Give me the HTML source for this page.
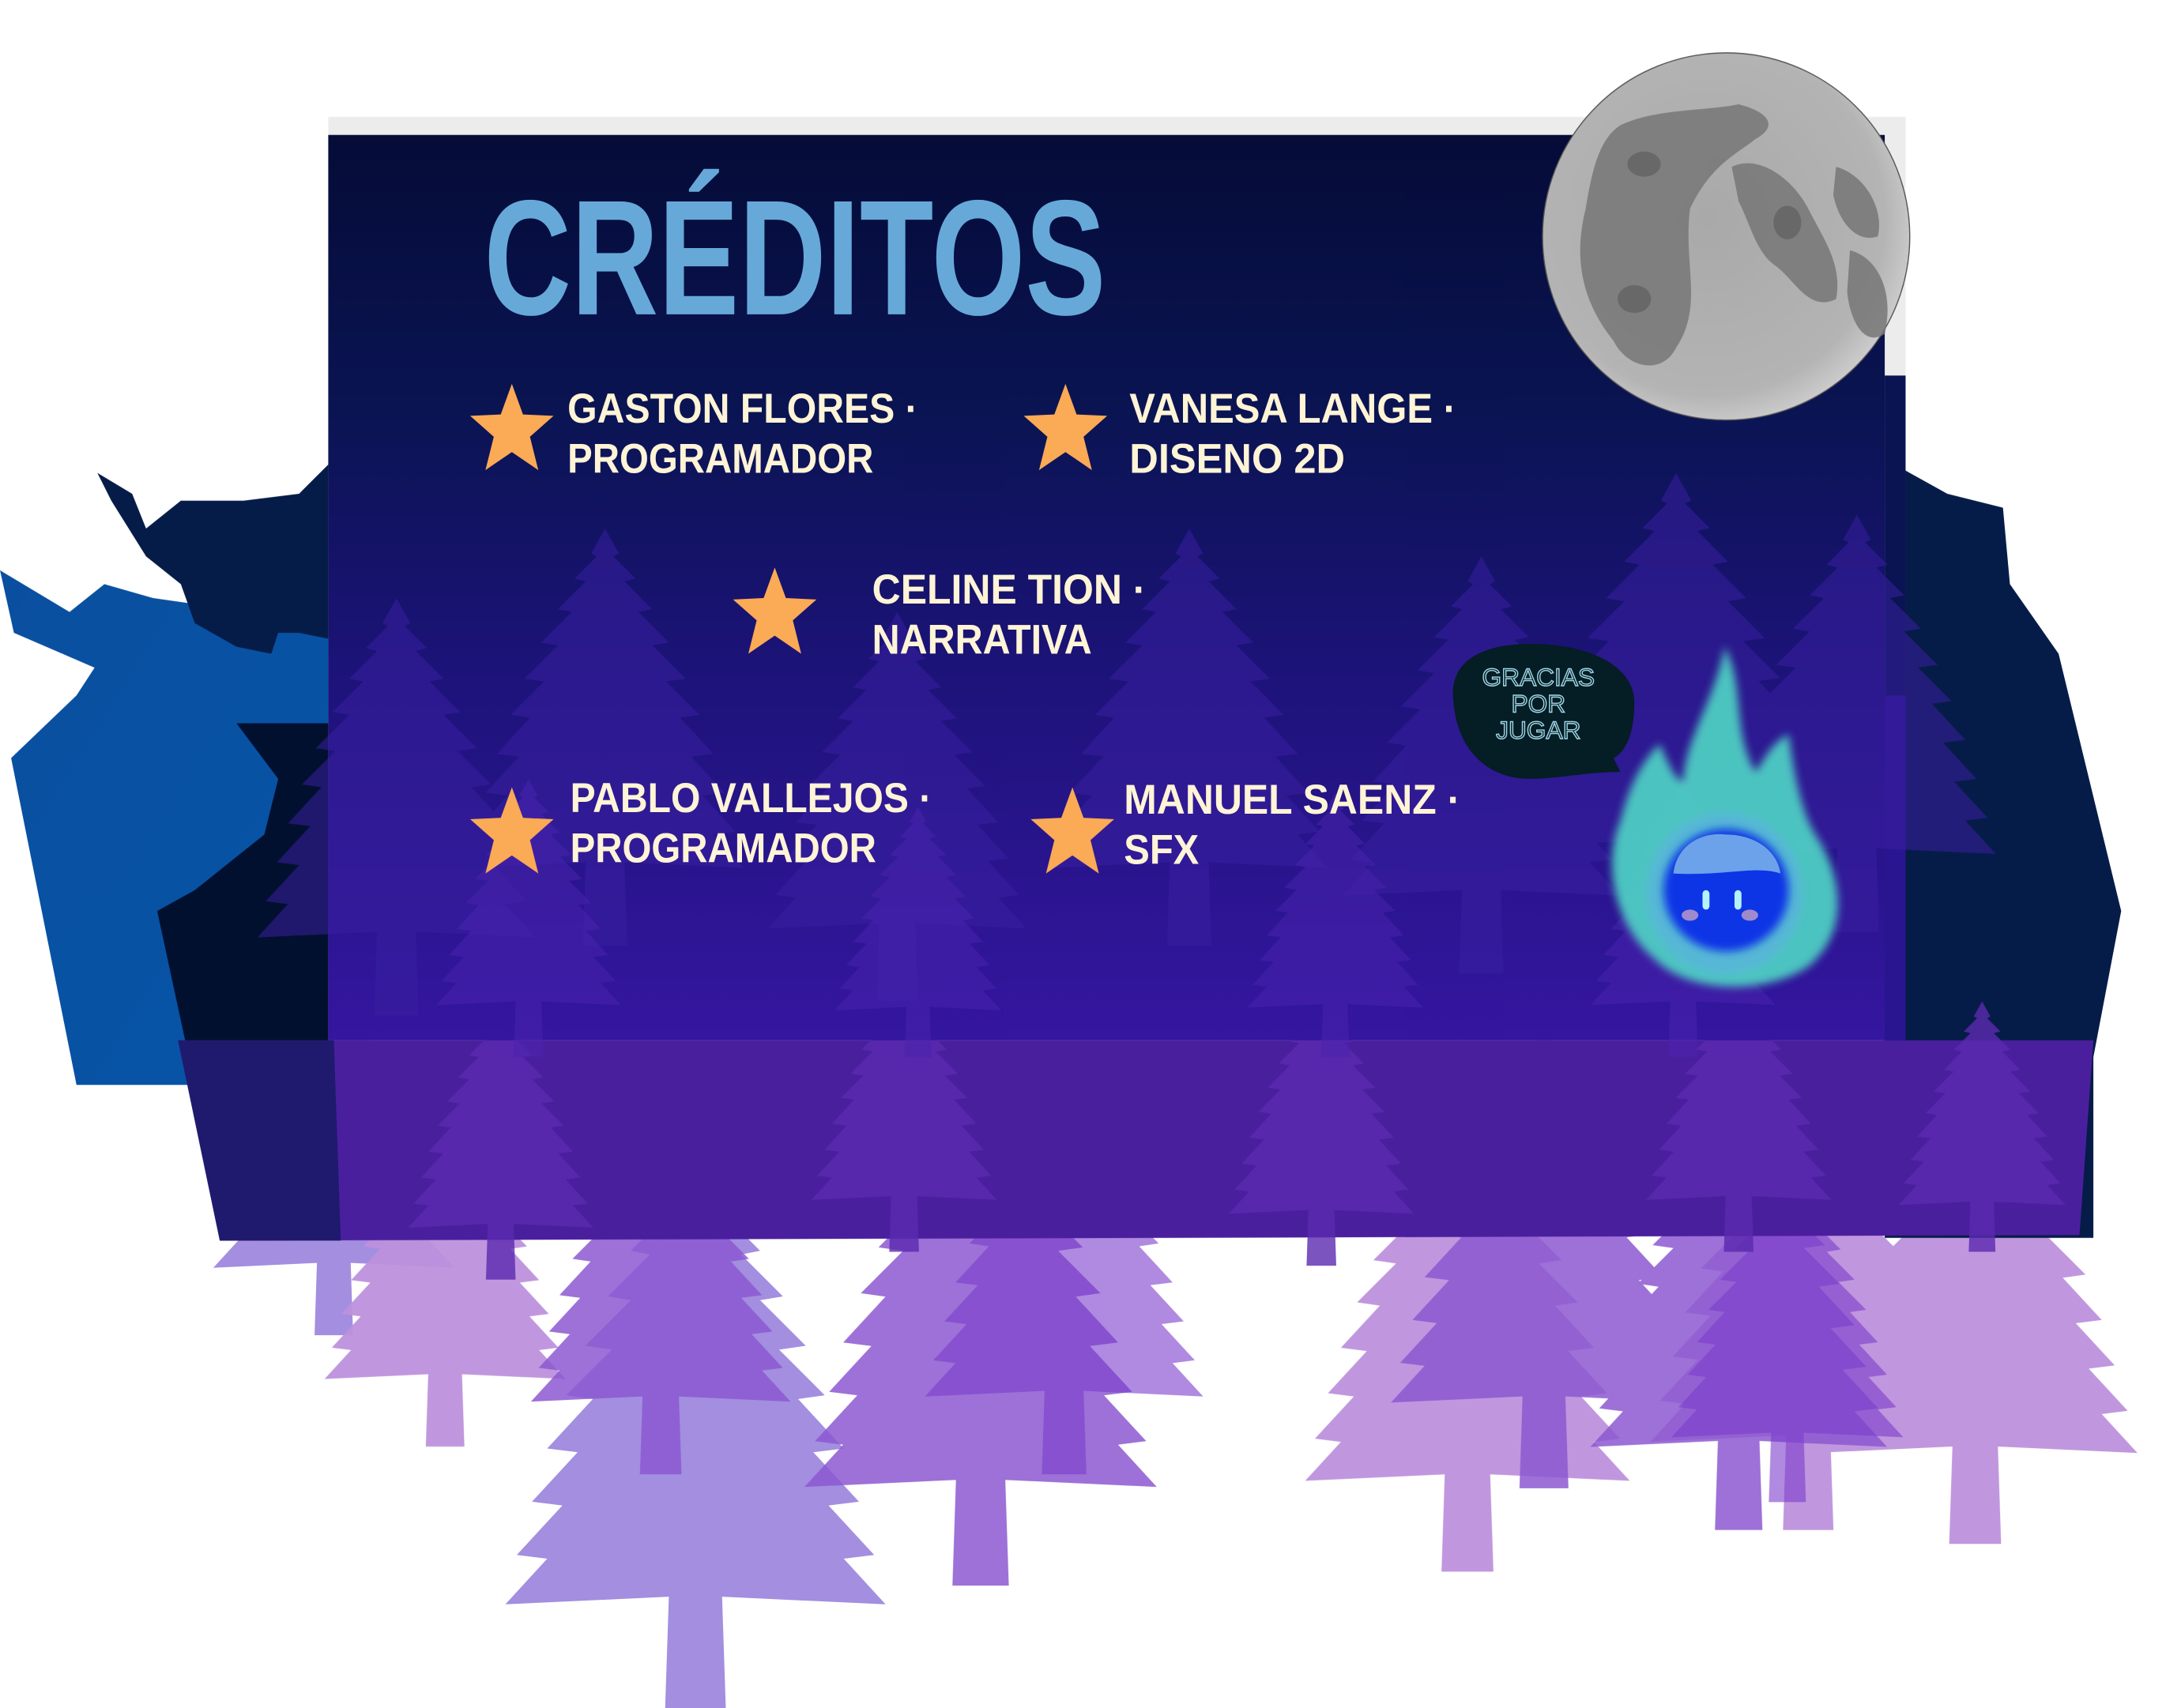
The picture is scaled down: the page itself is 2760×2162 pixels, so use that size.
<!DOCTYPE html>
<html><head><meta charset="utf-8"><style>
html,body{margin:0;padding:0;background:#fff;width:2760px;height:2162px;overflow:hidden}
svg{display:block}
</style></head><body>
<svg width="2760" height="2162" viewBox="0 0 1568 1228" preserveAspectRatio="none" xmlns="http://www.w3.org/2000/svg">
<defs>
<symbol id="tree" viewBox="-100 0 200 300" overflow="visible">
<path d="M0,0 L10,18 L6,20 L22,36 L14,38 L34,58 L24,60 L46,82 L34,84 L58,108 L44,110 L68,134 L54,136 L78,162 L62,164 L86,190 L70,192 L94,218 L78,220 L100,244 L14,240 L16,300 L-16,300 L-14,240 L-100,244 L-78,220 L-94,218 L-70,192 L-86,190 L-62,164 L-78,162 L-54,136 L-68,134 L-44,110 L-58,108 L-34,84 L-46,82 L-24,60 L-34,58 L-14,38 L-22,36 L-6,20 L-10,18 Z"/>
</symbol>
<linearGradient id="pg" x1="0" y1="0" x2="0" y2="1">
<stop offset="0" stop-color="#050c38"/><stop offset="0.3" stop-color="#0a1452"/><stop offset="0.6" stop-color="#1d137a"/><stop offset="1" stop-color="#3516a0"/>
</linearGradient>
<linearGradient id="bl" x1="0" y1="0" x2="1" y2="1">
<stop offset="0" stop-color="#0b4f9f"/><stop offset="1" stop-color="#0655a8"/>
</linearGradient>
<radialGradient id="moon" cx="0.45" cy="0.45" r="0.6">
<stop offset="0" stop-color="#a9a9a9"/><stop offset="0.8" stop-color="#b4b4b4"/><stop offset="1" stop-color="#d4d4d4"/>
</radialGradient>
<filter id="blur"><feGaussianBlur stdDeviation="3"/></filter>
<filter id="blur2"><feGaussianBlur stdDeviation="8"/></filter>
</defs>

<!-- lower lavender trees -->
<g fill="#a38ee0">
<use href="#tree" x="330" y="820" width="340" height="410"/>
<use href="#tree" x="80" y="700" width="320" height="260"/>
</g>
<g fill="#bd92dd" opacity="0.95">
<use href="#tree" x="160" y="780" width="320" height="260"/>
<use href="#tree" x="890" y="780" width="330" height="350"/>
<use href="#tree" x="1260" y="760" width="320" height="350"/>
<use href="#tree" x="1140" y="760" width="320" height="340"/>
</g>
<g fill="#8c58d0" opacity="0.85">
<use href="#tree" x="540" y="760" width="330" height="380"/>
<use href="#tree" x="960" y="740" width="300" height="330"/>
<use href="#tree" x="330" y="780" width="290" height="280"/>
<use href="#tree" x="1110" y="780" width="280" height="320"/>
</g>
<g fill="#7a3ccc" opacity="0.6">
<use href="#tree" x="620" y="760" width="290" height="300"/>
<use href="#tree" x="1160" y="830" width="250" height="250"/>
</g>

<!-- left blue shape -->
<path d="M0,410 L25,425 L50,440 L75,420 L110,430 L180,440 L200,435 L240,400 L240,780 L55,780 L8,545 L55,500 L68,480 L10,455 Z" fill="url(#bl)"/>
<path d="M70,340 L95,355 L105,380 L130,360 L175,360 L215,355 L240,330 L240,460 L215,455 L200,455 L195,470 L170,465 L140,448 L130,420 L105,400 L80,360 Z" fill="#061c48"/>
<path d="M113,655 L140,640 L190,600 L200,560 L170,520 L240,520 L240,780 L140,780 Z" fill="#02102f"/>

<!-- right navy shape -->
<path d="M1355,330 L1400,355 L1440,365 L1445,420 L1480,470 L1525,655 L1505,760 L1505,890 L1355,890 Z" fill="#061c48"/>

<!-- back gray panel -->
<rect x="236" y="84" width="1134" height="664" fill="#ececec"/>
<!-- lower purple box -->
<path d="M128,748 L1505,748 L1495,888 L158,892 Z" fill="#4a1f9e"/>
<path d="M128,748 L240,748 L245,892 L158,892 Z" fill="#1f1a6e"/>
<g fill="#5b2ab0" opacity="0.8">
<use href="#tree" x="210" y="720" width="300" height="200"/>
<use href="#tree" x="500" y="700" width="300" height="200"/>
<use href="#tree" x="800" y="710" width="300" height="200"/>
<use href="#tree" x="1100" y="700" width="300" height="200"/>
<use href="#tree" x="1300" y="720" width="250" height="180"/>
</g>
<!-- main dark panel -->
<rect x="236" y="97" width="1119" height="651" fill="url(#pg)"/>
<rect x="1355" y="270" width="15" height="478" fill="#0a1452"/>
<rect x="1355" y="500" width="15" height="248" fill="#2a1590"/>
<g fill="#3a1fa0" opacity="0.55">
<use href="#tree" x="320" y="380" width="230" height="300"/>
<use href="#tree" x="740" y="380" width="230" height="300"/>
<use href="#tree" x="950" y="400" width="230" height="300"/>
<use href="#tree" x="1090" y="340" width="230" height="330"/>
<use href="#tree" x="1220" y="370" width="230" height="300"/>
<use href="#tree" x="530" y="440" width="230" height="280"/>
<use href="#tree" x="170" y="430" width="230" height="300"/>
</g>
<g fill="#4a24b0" opacity="0.5">
<use href="#tree" x="230" y="560" width="300" height="200"/>
<use href="#tree" x="510" y="580" width="300" height="180"/>
<use href="#tree" x="810" y="570" width="300" height="190"/>
<use href="#tree" x="1060" y="560" width="300" height="200"/>
</g>

<!-- moon -->
<circle cx="1241" cy="170" r="132" fill="url(#moon)" stroke="#555" stroke-width="0.8"/>
<g fill="#777" opacity="0.85">
<path d="M1165,90 C1190,78 1225,80 1250,75 C1270,80 1280,90 1262,100 C1250,110 1230,118 1215,150 C1210,190 1225,220 1205,250 C1195,270 1170,265 1160,245 C1140,220 1130,190 1140,150 C1145,120 1150,100 1165,90 Z"/>
<path d="M1245,120 C1265,110 1290,130 1300,150 C1310,170 1325,190 1320,215 C1300,225 1290,200 1275,190 C1262,180 1258,160 1250,145 Z"/>
<path d="M1320,120 C1340,125 1355,150 1350,170 C1335,175 1322,160 1318,140 Z"/>
<path d="M1330,180 C1350,185 1362,210 1355,240 C1340,250 1330,230 1328,210 Z"/>
</g>
<g fill="#5e5e5e" opacity="0.7">
<ellipse cx="1182" cy="118" rx="12" ry="9"/>
<ellipse cx="1285" cy="160" rx="10" ry="12"/>
<ellipse cx="1175" cy="215" rx="12" ry="10"/>
</g>

<!-- title -->
<text x="348" y="226" font-family="Liberation Sans, sans-serif" font-weight="bold" font-size="118" fill="#66a9d9" textLength="447" lengthAdjust="spacingAndGlyphs">CRÉDITOS</text>

<!-- stars -->
<g fill="#fbaa55">
<path d="M0,-32 L8,-10 L30,-9 L13,6 L19,30 L0,17 L-19,30 L-13,6 L-30,-9 L-8,-10 Z" transform="translate(368,308)"/>
<path d="M0,-32 L8,-10 L30,-9 L13,6 L19,30 L0,17 L-19,30 L-13,6 L-30,-9 L-8,-10 Z" transform="translate(766,308)"/>
<path d="M0,-32 L8,-10 L30,-9 L13,6 L19,30 L0,17 L-19,30 L-13,6 L-30,-9 L-8,-10 Z" transform="translate(557,440)"/>
<path d="M0,-32 L8,-10 L30,-9 L13,6 L19,30 L0,17 L-19,30 L-13,6 L-30,-9 L-8,-10 Z" transform="translate(368,598)"/>
<path d="M0,-32 L8,-10 L30,-9 L13,6 L19,30 L0,17 L-19,30 L-13,6 L-30,-9 L-8,-10 Z" transform="translate(771,598)"/>
</g>

<!-- names -->
<g font-family="Liberation Sans Narrow, Liberation Sans, sans-serif" font-weight="bold" font-size="30" fill="#fff4d6">
<text x="408" y="304" textLength="252" lengthAdjust="spacingAndGlyphs">GASTON FLORES ·</text>
<text x="408" y="340" textLength="220" lengthAdjust="spacingAndGlyphs">PROGRAMADOR</text>
<text x="812" y="304" textLength="235" lengthAdjust="spacingAndGlyphs">VANESA LANGE ·</text>
<text x="812" y="340" textLength="155" lengthAdjust="spacingAndGlyphs">DISENO 2D</text>
<text x="627" y="434" textLength="197" lengthAdjust="spacingAndGlyphs">CELINE TION ·</text>
<text x="627" y="470" textLength="158" lengthAdjust="spacingAndGlyphs">NARRATIVA</text>
<text x="410" y="584" textLength="260" lengthAdjust="spacingAndGlyphs">PABLO VALLEJOS ·</text>
<text x="410" y="620" textLength="220" lengthAdjust="spacingAndGlyphs">PROGRAMADOR</text>
<text x="808" y="585" textLength="242" lengthAdjust="spacingAndGlyphs">MANUEL SAENZ ·</text>
<text x="808" y="621" textLength="54" lengthAdjust="spacingAndGlyphs">SFX</text>
</g>

<!-- speech bubble -->
<path d="M1045,505 C1040,470 1075,462 1105,463 C1145,464 1175,480 1175,505 C1175,525 1170,540 1160,545 L1165,555 C1140,555 1120,560 1100,560 C1070,560 1048,540 1045,505 Z" fill="#051d24"/>
<g font-family="Liberation Sans Narrow, Liberation Sans, sans-serif" font-size="18" fill="none" stroke="#9fd6e6" stroke-width="0.8" text-anchor="middle">
<text x="1106" y="493">GRACIAS</text>
<text x="1106" y="512">POR</text>
<text x="1106" y="531">JUGAR</text>
</g>

<!-- flame ghost -->
<g filter="url(#blur)">
<path d="M1240,465 C1255,495 1245,525 1262,555 C1268,548 1272,535 1286,528 C1290,560 1296,585 1305,600 C1325,630 1330,670 1300,695 C1270,715 1215,715 1190,690 C1160,665 1152,620 1165,590 C1170,570 1178,550 1193,535 C1198,545 1203,560 1210,562 C1212,530 1232,505 1240,465 Z" fill="#4fd2c4" opacity="0.92"/>
<ellipse cx="1240" cy="642" rx="56" ry="58" fill="#5ab3dd" opacity="0.75"/>
</g>
<ellipse cx="1241" cy="640" rx="45" ry="44" fill="#0a36e6" filter="url(#blur)"/>
<path d="M1203,628 C1206,606 1225,598 1241,600 C1262,600 1278,612 1280,628 C1262,622 1240,630 1203,628 Z" fill="#6ba2ea"/>
<rect x="1224" y="640" width="5" height="14" rx="2.5" fill="#b6f1ff"/>
<rect x="1247" y="640" width="5" height="14" rx="2.5" fill="#b6f1ff"/>
<ellipse cx="1215" cy="658" rx="6" ry="4" fill="#a08acc"/>
<ellipse cx="1258" cy="658" rx="6" ry="4" fill="#a08acc"/>
</svg>
</body></html>
